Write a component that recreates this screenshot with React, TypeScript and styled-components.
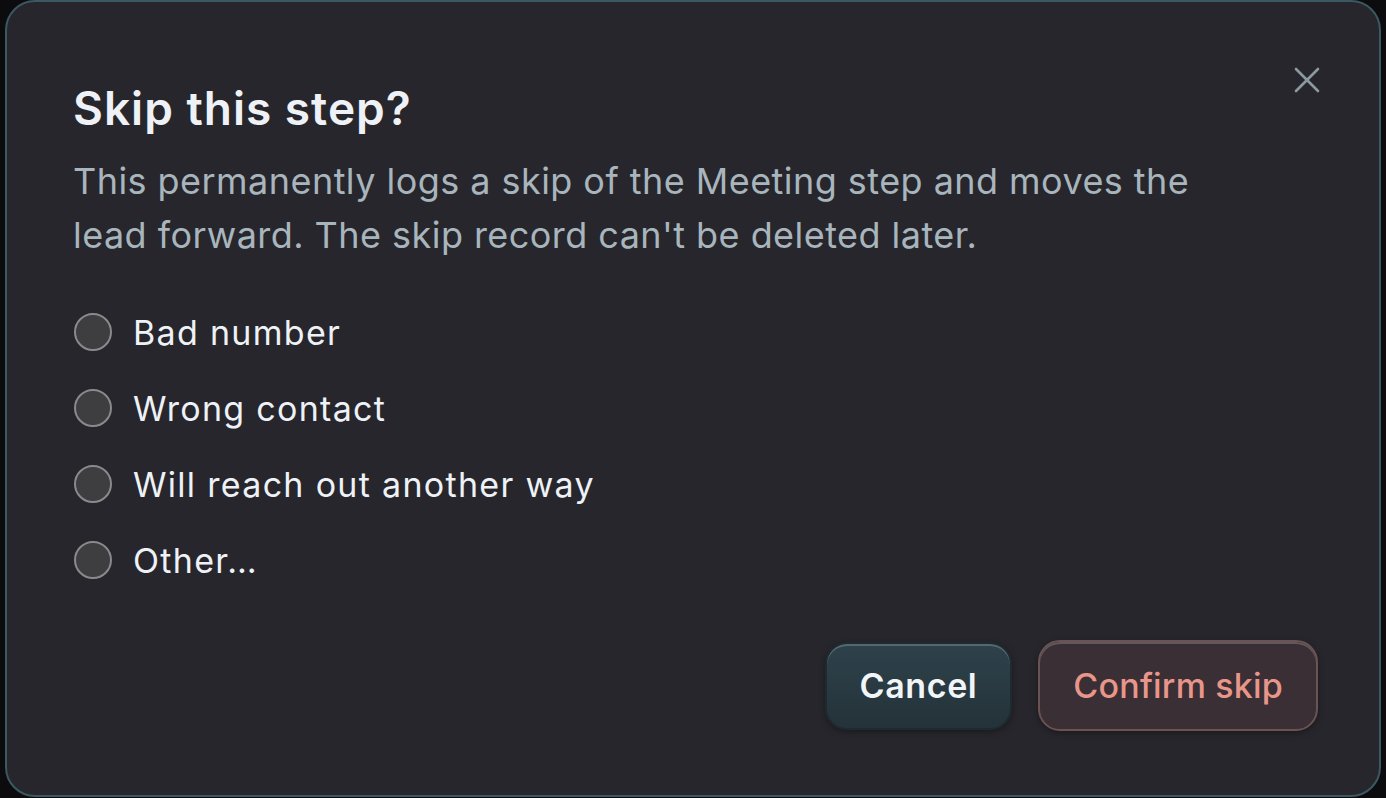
import React, { useState } from "react";
import styled, { createGlobalStyle } from "styled-components";

const Global = createGlobalStyle`
  html, body { margin: 0; padding: 0; background: #0c0c0e; }
  body { font-family: "Inter", "Noto Sans", sans-serif; }
  * { box-sizing: border-box; }
`;

const Page = styled.div`
  width: 1386px;
  height: 798px;
  padding: 0 5px 1px 5px;
  display: flex;
  background: #0c0c0e;
`;

const Dialog = styled.div`
  flex: 1;
  position: relative;
  background: #27262c;
  border: 2px solid #3b5863;
  border-radius: 30px;
  padding: 76px 61px 64px 66px;
  display: flex;
  flex-direction: column;
`;

const Title = styled.h2`
  margin: 0;
  font-size: 46px;
  font-weight: 600;
  color: #eef2f6;
  letter-spacing: 1px;
  line-height: 60px;
`;

const Description = styled.p`
  margin: 16px 0 0 0;
  font-size: 36px;
  line-height: 54px;
  color: #a8b5bd;
  letter-spacing: 0.45px;
  max-width: 1150px;
`;

const CloseButton = styled.button`
  position: absolute;
  top: 63px;
  right: 57px;
  width: 30px;
  height: 30px;
  padding: 0;
  border: none;
  background: transparent;
  display: flex;
  align-items: center;
  justify-content: center;
  cursor: pointer;
`;

const Options = styled.div`
  margin-top: 45px;
  display: flex;
  flex-direction: column;
  gap: 26px;
`;

const Option = styled.label`
  display: flex;
  align-items: center;
  gap: 22px;
  height: 50px;
  cursor: pointer;
  font-size: 34px;
  color: #eef2f6;
  letter-spacing: 1.3px;
`;

const RadioCircle = styled.span<{ $checked: boolean }>`
  width: 38px;
  height: 38px;
  margin-left: 1px;
  margin-right: -1px;
  border-radius: 50%;
  border: 2.5px solid #8a8a8c;
  background: ${(p) => (p.$checked ? "#6a7c85" : "#3e3e40")};
  flex-shrink: 0;
`;

const Footer = styled.div`
  margin-top: auto;
  display: flex;
  justify-content: flex-end;
  align-items: center;
  gap: 26px;
`;

const Button = styled.button<{ $variant: "cancel" | "danger" }>`
  height: ${(p) => (p.$variant === "cancel" ? "88px" : "91px")};
  padding: 0 33px;
  border-radius: 22px;
  font-family: inherit;
  font-size: 34px;
  font-weight: ${(p) => (p.$variant === "cancel" ? 600 : 500)};
  letter-spacing: ${(p) => (p.$variant === "cancel" ? "0.6px" : "0.2px")};
  cursor: pointer;
  color: ${(p) => (p.$variant === "cancel" ? "#f2f5f7" : "#e8968a")};
  background: ${(p) =>
    p.$variant === "cancel"
      ? "linear-gradient(180deg, #2e424b 0%, #243239 100%)"
      : "#3a2f35"};
  border: 2px solid ${(p) => (p.$variant === "cancel" ? "#1d2a30" : "#6b5353")};
  box-shadow: inset 0 2px 0 rgba(255, 255, 255, 0.2),
    0 2px 6px rgba(0, 0, 0, 0.35);
`;

const reasons = ["Bad number", "Wrong contact", "Will reach out another way", "Other…"];

export default function App() {
  const [sel, setSel] = useState<number | null>(null);
  return (
    <>
      <Global />
      <Page>
        <Dialog>
          <CloseButton aria-label="Close">
            <svg width="28" height="28" viewBox="0 0 28 28">
              <path d="M3 3 L25 25 M25 3 L3 25" stroke="#8c99a1" strokeWidth="2.6" strokeLinecap="round" />
            </svg>
          </CloseButton>
          <Title>Skip this step?</Title>
          <Description>
            This permanently logs a skip of the Meeting step and moves the lead forward. The skip record
            can't be deleted later.
          </Description>
          <Options>
            {reasons.map((r, i) => (
              <Option key={r} onClick={() => setSel(i)}>
                <RadioCircle $checked={sel === i} />
                {r}
              </Option>
            ))}
          </Options>
          <Footer>
            <Button $variant="cancel">Cancel</Button>
            <Button $variant="danger">Confirm skip</Button>
          </Footer>
        </Dialog>
      </Page>
    </>
  );
}
